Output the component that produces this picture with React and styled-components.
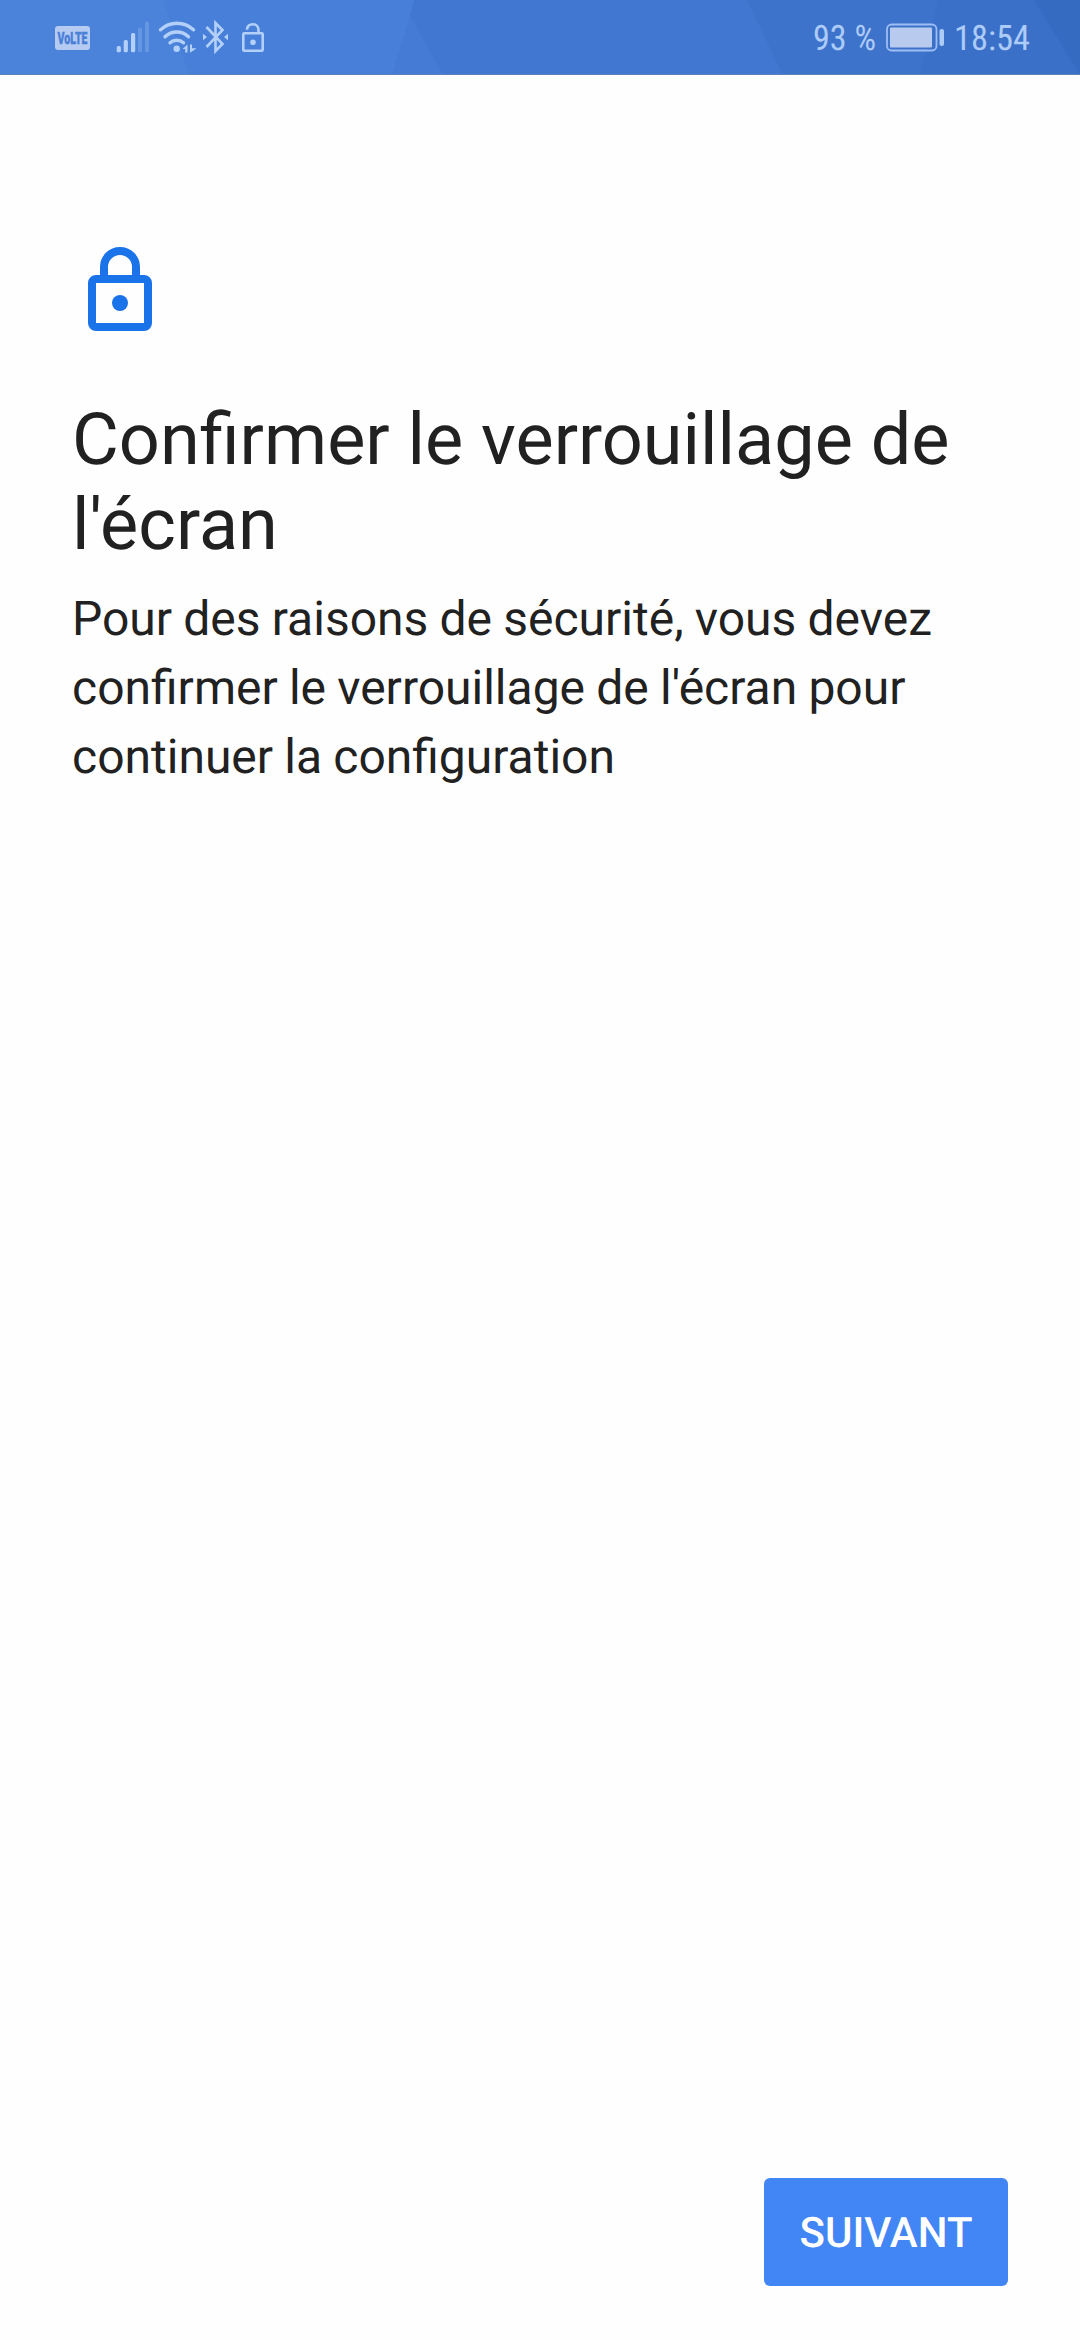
import React from "react";
import styled, { createGlobalStyle } from "styled-components";

const GlobalStyle = createGlobalStyle`
  html, body { margin: 0; padding: 0; background: #fefefe; }
  *, *::before, *::after { box-sizing: border-box; }
`;

const Screen = styled.div`
  display: flex;
  flex-direction: column;
  width: 1080px;
  height: 2340px;
  background: #fefefe;
  color: #212121;
  font-family: Roboto, "Noto Sans", sans-serif;
  text-rendering: geometricPrecision;
`;

const StatusBar = styled.header`
  position: relative;
  display: flex;
  justify-content: space-between;
  height: 75px;
  padding: 0 50px 0 55px;
  background: #4177d0;
  color: #b3d0f8;
`;

const Wallpaper = styled.svg`
  position: absolute;
  inset: 0;
  width: 100%;
  height: 100%;
`;

const StatusGroup = styled.div`
  position: relative;
  display: flex;
  align-items: center;
`;

const StatusIcon = styled.svg`
  display: block;
  flex: none;
  width: ${(p) => p.$width}px;
  height: 75px;
  margin-left: ${(p) => p.$gap || 0}px;
`;

const VolteBadge = styled.div`
  display: flex;
  align-items: center;
  justify-content: center;
  width: 35px;
  height: 24px;
  border-radius: 3px;
  background: #b5cbf1;
  color: #4a7fd8;
`;

const StatusText = styled.svg`
  display: block;
  flex: none;
  overflow: visible;
  width: ${(p) => p.$width}px;
  height: 75px;
  margin-left: ${(p) => p.$gap || 0}px;
  fill: #adcbf7;
  font-family: "Roboto Condensed", Roboto, sans-serif;
  font-size: 35px;
`;

const BadgeText = styled.svg`
  overflow: visible;
  width: 31px;
  height: 24px;
  fill: currentColor;
  stroke: currentColor;
  stroke-width: 0.4px;
  font-family: Roboto, sans-serif;
  font-size: 17px;
  font-weight: 900;
`;

const Content = styled.main`
  display: flex;
  flex: 1;
  flex-direction: column;
  align-items: flex-start;
  padding: 165px 72px 0;
`;

const LockIcon = styled.svg`
  width: 96px;
  height: 96px;
`;

const Title = styled.h1`
  margin: 61px 0 0;
  font-size: 72px;
  font-weight: 400;
  line-height: 85px;
`;

const Description = styled.p`
  margin: 17px 0 0;
  font-size: 48px;
  line-height: 69px;
  word-spacing: -0.7px;
`;

const Footer = styled.footer`
  display: flex;
  justify-content: flex-end;
  padding: 0 72px 54px;
`;

const NextButton = styled.button`
  width: 244px;
  height: 108px;
  padding: 3px 0 0;
  border: 0;
  border-radius: 6px;
  background: #4285f4;
  color: #fff;
  font: 500 42px/105px Roboto, sans-serif;
  text-rendering: geometricPrecision;
`;

function Signal() {
  return (
    <StatusIcon $width={33} $gap={26} viewBox="116 0 33 75" fill="currentColor">
      <rect x="116.7" y="46" width="4.2" height="6.2" rx="1.5" />
      <rect x="123.7" y="40" width="4.2" height="12.2" rx="1.5" />
      <rect x="131" y="33" width="4.2" height="19.2" rx="1.5" />
      <rect x="138" y="27.5" width="4" height="24.7" rx="1.5" opacity=".25" />
      <rect x="145" y="21.5" width="4" height="30.7" rx="1.5" opacity=".25" />
    </StatusIcon>
  );
}

function Wifi() {
  return (
    <StatusIcon $width={38} $gap={9} viewBox="158 0 38 75" fill="none" stroke="currentColor" strokeWidth="3.4" strokeLinecap="round">
      <path d="M160.500 29.800A24 24 0 0 1 193.500 29.800" />
      <path d="M165 36.700A17 17 0 0 1 188.500 36.700" />
      <path d="M170 42.800A10 10 0 0 1 183.500 42.800" />
      <circle cx="176.700" cy="48.800" r="3.200" fill="currentColor" stroke="none" />
      <path d="M182.500 49 187.500 44.500V52.500H185.200V49ZM190 44.500H192V48.300H196.500L190 52.800Z" fill="currentColor" stroke="none" />
    </StatusIcon>
  );
}

function Bluetooth() {
  return (
    <StatusIcon $width={28} $gap={6} viewBox="202 0 28 75" fill="none" stroke="currentColor" strokeWidth="2.600">
      <path d="M206.500 27 222.500 44 215.500 51V23L222.500 30 206.500 47" />
      <path d="M203 33.800 207 37 203 40.200ZM228 33.800 224 37 228 40.200Z" fill="currentColor" stroke="none" />
    </StatusIcon>
  );
}

function OpenLock() {
  return (
    <StatusIcon $width={24} $gap={11} viewBox="241 0 24 75" fill="none" stroke="currentColor" strokeWidth="2.600">
      <rect x="243.300" y="33.300" width="19.400" height="17.400" rx="1" />
      <path d="M247 29.800C247 22.300 258.500 22.300 258.500 30V33" />
      <circle cx="253" cy="42.200" r="2.800" fill="currentColor" stroke="none" />
    </StatusIcon>
  );
}

function Battery() {
  return (
    <StatusIcon $width={60} $gap={10} viewBox="884 0 60 75" fill="none">
      <rect x="886" y="24.500" width="49.500" height="26" rx="4.500" stroke="#9dbef4" strokeWidth="1.800" />
      <rect x="889" y="27.500" width="42" height="20" rx="1" fill="#b8caee" />
      <rect x="938.500" y="29" width="4.500" height="17" rx="2" fill="#adcbf7" />
    </StatusIcon>
  );
}

export default function App() {
  return (
    <>
      <GlobalStyle />
      <Screen>
        <StatusBar>
          <Wallpaper viewBox="0 0 1080 75" preserveAspectRatio="none">
            <path d="M0 0H414L410 16 443 75H0Z" fill="#487fd8" />
            <path d="M0 0H163L190 75H0Z" fill="#4b83db" />
            <path d="M410 16 443 75H392Z" fill="#457bd4" />
            <path d="M747 0H1080V75H783Z" fill="#3e73cb" />
            <path d="M938 0H1080V75H920Z" fill="#3b70c8" />
            <path d="M1034 0H1080V75Z" fill="#356bc1" />
            <rect y="74" width="1080" height="1" fill="#5b82b8" />
          </Wallpaper>
          <StatusGroup>
            <VolteBadge>
              <BadgeText>
                <text x="0.500" y="18" textLength="30" lengthAdjust="spacingAndGlyphs">VoLTE</text>
              </BadgeText>
            </VolteBadge>
            <Signal />
            <Wifi />
            <Bluetooth />
            <OpenLock />
          </StatusGroup>
          <StatusGroup>
            <StatusText $width={62}>
              <text x="0" y="50" textLength="63" lengthAdjust="spacingAndGlyphs">93 %</text>
            </StatusText>
            <Battery />
            <StatusText $width={76} $gap={9}>
              <text x="0" y="50" textLength="76" lengthAdjust="spacingAndGlyphs">18:54</text>
            </StatusText>
          </StatusGroup>
        </StatusBar>
        <Content>
          <LockIcon viewBox="0 0 24 24" fill="none" stroke="#1a73e8" strokeWidth="2" aria-hidden="true">
            <path d="M8 9.500V6.750a4 4 0 0 1 8 0V9.500" />
            <path
              d="M6 8.750h12a2 2 0 0 1 2 2v10a2 2 0 0 1-2 2H6a2 2 0 0 1-2-2v-10a2 2 0 0 1 2-2ZM6 10.750v10h12v-10Z"
              fill="#1a73e8"
              fillRule="evenodd"
              stroke="none"
            />
            <circle cx="12" cy="15.750" r="2" fill="#1a73e8" stroke="none" />
          </LockIcon>
          <Title>Confirmer le verrouillage de l'écran</Title>
          <Description>
            Pour des raisons de sécurité, vous devez confirmer le verrouillage de l'écran pour continuer la configuration
          </Description>
        </Content>
        <Footer>
          <NextButton type="button">SUIVANT</NextButton>
        </Footer>
      </Screen>
    </>
  );
}
